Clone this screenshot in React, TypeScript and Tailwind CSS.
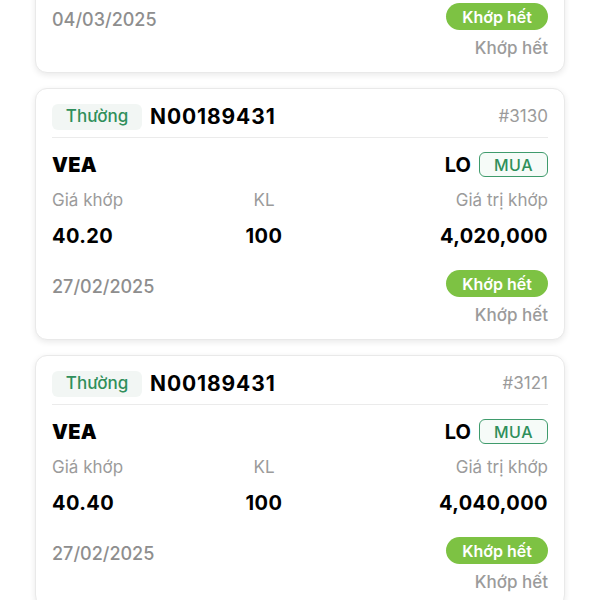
const orders = [
  { code: 'N00189431', id: '#3142', symbol: 'VEA', price: '40.50', qty: '100', value: '4,050,000', date: '04/03/2025' },
  { code: 'N00189431', id: '#3130', symbol: 'VEA', price: '40.20', qty: '100', value: '4,020,000', date: '27/02/2025' },
  { code: 'N00189431', id: '#3121', symbol: 'VEA', price: '40.40', qty: '100', value: '4,040,000', date: '27/02/2025' },
]

function OrderCard({ order }: { order: (typeof orders)[number] }) {
  return (
    <div className="h-[252px] rounded-[12px] border border-[#e9e9e9] bg-white px-[16px] pt-[15px] shadow-[0_2px_6px_rgba(0,0,0,0.09)]">
      <div className="flex h-[26px] items-center">
        <span className="flex h-[26px] w-[90px] items-center justify-center rounded-[6px] bg-[#f2f6f4] text-[17px] font-medium text-[#2f8f5b]">
          Thường
        </span>
        <span className="ml-[8px] text-[21px] font-bold tracking-[0.9px] text-black">{order.code}</span>
        <span className="ml-auto text-[17px] text-[#9b9b9b]">{order.id}</span>
      </div>
      <div className="mt-[7px] h-px bg-[#ebebeb]" />
      <div className="mt-[14px] flex h-[25px] items-center">
        <span className="text-[20px] font-black tracking-[0.3px] text-black">{order.symbol}</span>
        <span className="ml-auto text-[20px] font-bold text-black">LO</span>
        <span className="ml-[8px] flex h-[25px] w-[69px] items-center justify-center rounded-[6px] border border-[#3f9b6c] bg-[#f6fbf8] text-[16px] font-medium tracking-[0.5px] text-[#2f8f5b]">
          MUA
        </span>
      </div>
      <div className="mt-[11px] grid h-[22px] grid-cols-[172px_80px_1fr] items-center text-[17px] text-[#9b9b9b]">
        <span>Giá khớp</span>
        <span className="text-center">KL</span>
        <span className="text-right">Giá trị khớp</span>
      </div>
      <div className="mt-[11px] grid h-[28px] grid-cols-[172px_80px_1fr] items-center text-[20px] font-bold tracking-[0.4px] text-black">
        <span>{order.price}</span>
        <span className="text-center">{order.qty}</span>
        <span className="text-right">{order.value}</span>
      </div>
      <div className="mt-[21px] flex h-[27px] items-center">
        <span className="pt-[5px] text-[18px] font-medium text-[#8e8e8e]">{order.date}</span>
        <span className="ml-auto flex h-[27px] w-[102px] items-center justify-center rounded-full bg-[#7dc243] text-[16px] font-semibold text-white">
          Khớp hết
        </span>
      </div>
      <div className="mt-[8px] h-[20px] text-right text-[17px] font-medium leading-[20px] text-[#9b9b9b]">Khớp hết</div>
    </div>
  )
}

export default function App() {
  return (
    <div className="h-[600px] w-[600px] overflow-hidden bg-white font-['Inter','Noto_Sans',sans-serif]">
      <div className="-mt-[179px] flex flex-col gap-[15px] px-[35px]">
        {orders.map((order, index) => (
          <OrderCard key={index} order={order} />
        ))}
      </div>
    </div>
  )
}
